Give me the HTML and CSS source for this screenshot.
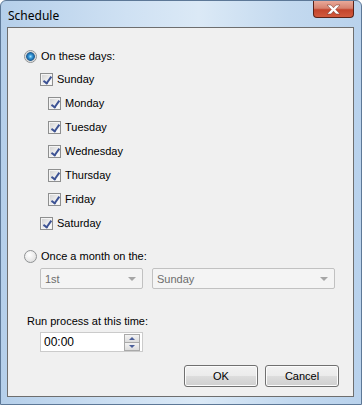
FILE: index.html
```html
<!DOCTYPE html>
<html lang="en">
<head>
    <meta charset="UTF-8">
    <title>Schedule</title>
    <link rel="stylesheet" href="styles.css">
</head>
<body>
    <div class="window">
        <div class="titlebar">
            <span class="title">Schedule</span>
            <div class="close-btn">
                <svg width="17" height="11" viewBox="0 0 17 11">
                    <path d="M2 1h4l2.5 2.8L11 1h4l-4.3 4.5L15 10h-4L8.5 7.2 6 10H2l4.3-4.5z" fill="#fff" stroke="#6b2a20" stroke-width="0.8" stroke-opacity="0.6"/>
                </svg>
            </div>
        </div>
        <div class="client">
            <div class="row first">
                <span class="radio checked"></span>
                <span>On these days:</span>
            </div>
            <div class="days">
                <div class="row"><span class="check"></span><span>Sunday</span></div>
                <div class="weekdays">
                    <div class="row"><span class="check"></span><span>Monday</span></div>
                    <div class="row"><span class="check"></span><span>Tuesday</span></div>
                    <div class="row"><span class="check"></span><span>Wednesday</span></div>
                    <div class="row"><span class="check"></span><span>Thursday</span></div>
                    <div class="row"><span class="check"></span><span>Friday</span></div>
                </div>
                <div class="row"><span class="check"></span><span>Saturday</span></div>
            </div>
            <div class="row monthly">
                <span class="radio"></span>
                <span>Once a month on the:</span>
            </div>
            <div class="combos">
                <div class="combo small"><span>1st</span><span class="arrow"></span></div>
                <div class="combo wide"><span>Sunday</span><span class="arrow"></span></div>
            </div>
            <div class="time-label">Run process at this time:</div>
            <div class="time-box">
                <span>00:00</span>
                <div class="spin">
                    <div class="spin-btn"><span class="up"></span></div>
                    <div class="spin-btn"><span class="down"></span></div>
                </div>
            </div>
            <div class="buttons">
                <button class="btn">OK</button>
                <button class="btn">Cancel</button>
            </div>
        </div>
    </div>
</body>
</html>
```

FILE: styles.css
```css
body {
    margin: 0;
    font-family: "Liberation Sans", Arial, sans-serif;
    font-size: 11px;
    color: #000;
    background: #fff;
}
.window {
    width: 362px;
    height: 405px;
    box-sizing: border-box;
    border: 1px solid #5d7897;
    border-radius: 6px 6px 0 0;
    background: linear-gradient(90deg, #b5cfea 0%, #cfe1f3 35%, #dbe9f6 55%, #c3d9ef 80%, #b9d2ec 100%);
    display: flex;
    flex-direction: column;
}
.titlebar {
    height: 26px;
    display: flex;
    align-items: flex-start;
    justify-content: space-between;
}
.title {
    font-family: "Noto Sans", "Liberation Sans", sans-serif;
    font-size: 12px;
    margin: 6px 0 0 7px;
    color: #000;
}
.close-btn {
    width: 41px;
    height: 17px;
    box-sizing: border-box;
    margin-right: 7px;
    border: 1px solid #5a2218;
    border-top: none;
    border-radius: 0 0 4px 4px;
    background: linear-gradient(#e9a999 0%, #d6826f 45%, #c3442c 55%, #d25a3e 100%);
    display: flex;
    align-items: center;
    justify-content: center;
}
.client {
    margin: 0 7px 7px 6px;
    flex: 1;
    background: #f0f0f0;
    border: 1px solid #6e6e6e;
    padding: 17px 0 0 16px;
    display: flex;
    flex-direction: column;
}
.row {
    height: 24px;
    display: flex;
    align-items: center;
    gap: 4px;
}
.row.first {
    height: 22px;
}
.days {
    margin-left: 16px;
}
.weekdays {
    margin-left: 8px;
}
.row.monthly {
    height: 22px;
    margin-top: 10px;
}
.radio {
    width: 11px;
    height: 11px;
    border: 1px solid #8f9294;
    border-radius: 50%;
    background: radial-gradient(circle at 40% 35%, #ffffff 0%, #e8e8e8 60%, #d2d2d2 100%);
}
.radio.checked {
    background: radial-gradient(circle closest-side, #9fe4ff 0%, #3596d8 35%, #1a5c94 72%, #c8c8c8 84%, #f4f4f4 100%);
}
.check {
    width: 11px;
    height: 11px;
    border: 1px solid #8e8f8f;
    background: linear-gradient(135deg, #cfcfcf, #f6f6f6 70%, #ffffff);
    box-shadow: inset 0 0 0 1px #f4f4f4;
    position: relative;
}
.check::after {
    content: "";
    position: absolute;
    left: 4px;
    top: 1px;
    width: 3px;
    height: 7px;
    border: solid #3d5394;
    border-width: 0 2px 2px 0;
    transform: rotate(35deg);
}
.combos {
    display: flex;
    gap: 9px;
    margin: 1px 0 0 16px;
}
.combo {
    height: 21px;
    box-sizing: border-box;
    border: 1px solid #c1c1c1;
    border-radius: 2px;
    background: #f4f4f4;
    color: #6d6d6d;
    display: flex;
    align-items: center;
    justify-content: space-between;
    padding: 0 6px 0 4px;
}
.combo.small {
    width: 103px;
}
.combo.wide {
    width: 183px;
}
.arrow {
    width: 0;
    height: 0;
    border-left: 4px solid transparent;
    border-right: 4px solid transparent;
    border-top: 4px solid #a6a6a6;
}
.time-label {
    margin: 25px 0 0 3px;
    line-height: 14px;
}
.time-box {
    width: 103px;
    height: 20px;
    box-sizing: border-box;
    margin: 4px 0 0 16px;
    border: 1px solid #cbcbcb;
    background: #fff;
    display: flex;
    align-items: center;
    justify-content: space-between;
    padding: 0 2px 0 3px;
    font-size: 12px;
}
.spin {
    display: flex;
    flex-direction: column;
}
.spin-btn {
    width: 14px;
    height: 7px;
    border: 1px solid #a9a9a9;
    background: linear-gradient(#f4f4f4, #dcdcdc);
    display: flex;
    align-items: center;
    justify-content: center;
}
.spin-btn + .spin-btn {
    border-top: none;
}
.up {
    border-left: 3px solid transparent;
    border-right: 3px solid transparent;
    border-bottom: 3px solid #4b5f9a;
}
.down {
    border-left: 3px solid transparent;
    border-right: 3px solid transparent;
    border-top: 3px solid #4b5f9a;
}
.buttons {
    display: flex;
    justify-content: flex-end;
    gap: 7px;
    margin: 13px 14px 0 0;
}
.btn {
    width: 74px;
    height: 22px;
    font-family: "Liberation Sans", Arial, sans-serif;
    font-size: 11px;
    color: #000;
    border: 1px solid #707070;
    border-radius: 3px;
    background: linear-gradient(#f2f2f2 0%, #ebebeb 50%, #dddddd 50%, #cfcfcf 100%);
    box-shadow: inset 0 0 0 1px #fcfcfc;
    padding: 0;
}
```
